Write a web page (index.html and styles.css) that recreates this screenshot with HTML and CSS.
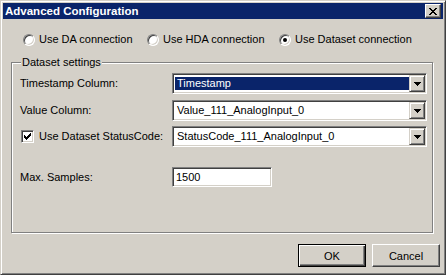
FILE: index.html
```html
<!DOCTYPE html>
<html lang="en">
<head>
    <meta charset="UTF-8">
    <title>Advanced Configuration</title>
    <link rel="stylesheet" href="styles.css">
</head>
<body>
    <div class="window">
        <div class="titlebar">
            <span class="title">Advanced Configuration</span>
            <button class="close-btn" title="Close">
                <svg width="8" height="7" viewBox="0 0 8 7" shape-rendering="crispEdges">
                    <path d="M0 0h2v1h-2z M6 0h2v1h-2z M1 1h2v1h-2z M5 1h2v1h-2z M2 2h4v1h-4z M3 3h2v1h-2z M2 4h4v1h-4z M1 5h2v1h-2z M5 5h2v1h-2z M0 6h2v1h-2z M6 6h2v1h-2z" fill="#000"/>
                </svg>
            </button>
        </div>

        <div class="client">
            <div class="radio-row">
                <label class="radio"><span class="radio-box"></span>Use DA connection</label>
                <label class="radio"><span class="radio-box"></span>Use HDA connection</label>
                <label class="radio"><span class="radio-box checked"></span>Use Dataset connection</label>
            </div>

            <div class="group">
                <span class="group-title">Dataset settings</span>

                <div class="form-row">
                    <span class="label">Timestamp Column:</span>
                    <div class="combo">
                        <span class="combo-text selected">Timestamp</span>
                        <span class="combo-btn"><svg width="7" height="4" viewBox="0 0 7 4" shape-rendering="crispEdges"><path d="M0 0h7v1h-1v1h-1v1h-1v1h-1v-1h-1v-1h-1v-1h-1z" fill="#000"/></svg></span>
                    </div>
                </div>

                <div class="form-row row-2">
                    <span class="label">Value Column:</span>
                    <div class="combo">
                        <span class="combo-text">Value_111_AnalogInput_0</span>
                        <span class="combo-btn"><svg width="7" height="4" viewBox="0 0 7 4" shape-rendering="crispEdges"><path d="M0 0h7v1h-1v1h-1v1h-1v1h-1v-1h-1v-1h-1v-1h-1z" fill="#000"/></svg></span>
                    </div>
                </div>

                <div class="form-row row-3">
                    <label class="label check">
                        <span class="check-box"><svg width="7" height="7" viewBox="0 0 7 7" shape-rendering="crispEdges"><path d="M6 0h1v3h-1v1h-1v1h-1v1h-1v1h-1v-1h-1v-1h-1v-3h1v1h1v1h1v-1h1v-1h1v-1h1z" fill="#000"/></svg></span>
                        Use Dataset StatusCode:
                    </label>
                    <div class="combo">
                        <span class="combo-text">StatusCode_111_AnalogInput_0</span>
                        <span class="combo-btn"><svg width="7" height="4" viewBox="0 0 7 4" shape-rendering="crispEdges"><path d="M0 0h7v1h-1v1h-1v1h-1v1h-1v-1h-1v-1h-1v-1h-1z" fill="#000"/></svg></span>
                    </div>
                </div>

                <div class="form-row row-4">
                    <span class="label">Max. Samples:</span>
                    <div class="textbox">1500</div>
                </div>
            </div>

            <div class="buttons">
                <button class="btn default">OK</button>
                <button class="btn">Cancel</button>
            </div>
        </div>
    </div>
</body>
</html>
```

FILE: styles.css
```css
body {
    margin: 0;
    font-family: "Liberation Sans", Arial, sans-serif;
    font-size: 11px;
    color: #000;
}
.window {
    width: 446px;
    height: 275px;
    box-sizing: border-box;
    background-color: #d4d0c8;
    border: 1px solid;
    border-color: #d4d0c8 #404040 #404040 #d4d0c8;
    box-shadow: inset 1px 1px #fff, inset -1px -1px #808080;
    padding: 2px;
    display: flex;
    flex-direction: column;
}
.titlebar {
    height: 16px;
    background-color: #0a246a;
    display: flex;
    align-items: center;
    justify-content: space-between;
    padding: 0 2px;
}
.title {
    color: #fff;
    font-weight: bold;
    font-size: 11.5px;
}
.close-btn {
    width: 16px;
    height: 14px;
    padding: 0;
    margin: 0;
    background-color: #d4d0c8;
    border: 1px solid;
    border-color: #fff #404040 #404040 #fff;
    box-shadow: inset -1px -1px #808080;
    display: flex;
    align-items: center;
    justify-content: center;
}
.client {
    flex: 1;
    padding: 14px 3px 0 8px;
}
.radio-row {
    display: grid;
    grid-template-columns: 124px 132px auto;
    margin-left: 12px;
    height: 13px;
}
.radio {
    display: flex;
    align-items: center;
    gap: 4px;
    line-height: 13px;
}
.radio-box {
    width: 12px;
    height: 12px;
    box-sizing: border-box;
    border-radius: 50%;
    background-color: #fff;
    border: 1px solid;
    border-color: #808080 #fff #fff #808080;
    box-shadow: inset 1px 1px #404040, inset -1px -1px #d4d0c8;
    position: relative;
}
.radio-box.checked::after {
    content: "";
    position: absolute;
    left: 3px;
    top: 3px;
    width: 4px;
    height: 4px;
    border-radius: 50%;
    background-color: #000;
}
.group {
    position: relative;
    margin-top: 16px;
    width: 422px;
    height: 171px;
    box-sizing: border-box;
    border: 1px solid #808080;
    box-shadow: inset 1px 1px #fff, 1px 1px #fff;
    padding: 10px 5px 0 8px;
}
.group-title {
    position: absolute;
    top: -8px;
    left: 9px;
    padding: 0 1px;
    line-height: 14px;
    background-color: #d4d0c8;
}
.form-row {
    display: grid;
    grid-template-columns: 152px 255px;
    align-items: center;
}
.row-2 {
    margin-top: 6px;
}
.row-3 {
    margin-top: 5px;
}
.row-4 {
    margin-top: 20px;
}
.label {
    line-height: 13px;
}
.label.check {
    display: flex;
    align-items: center;
    gap: 5px;
    padding-left: 1px;
}
.check-box {
    width: 13px;
    height: 13px;
    box-sizing: border-box;
    background-color: #fff;
    border: 1px solid;
    border-color: #808080 #fff #fff #808080;
    box-shadow: inset 1px 1px #404040, inset -1px -1px #d4d0c8;
    display: flex;
    align-items: center;
    justify-content: center;
}
.combo {
    height: 21px;
    box-sizing: border-box;
    background-color: #fff;
    border: 1px solid;
    border-color: #808080 #fff #fff #808080;
    box-shadow: inset 1px 1px #404040, inset -1px -1px #d4d0c8;
    padding: 1px;
    display: flex;
}
.combo-text {
    flex: 1;
    margin: 2px 0 2px 1px;
    padding-left: 2px;
    line-height: 13px;
    white-space: nowrap;
}
.combo-text.selected {
    background-color: #0a246a;
    color: #fff;
}
.combo-btn {
    width: 16px;
    height: 17px;
    box-sizing: border-box;
    background-color: #d4d0c8;
    border: 1px solid;
    border-color: #d4d0c8 #404040 #404040 #d4d0c8;
    box-shadow: inset 1px 1px #fff, inset -1px -1px #808080;
    display: flex;
    align-items: center;
    justify-content: center;
}
.textbox {
    width: 100px;
    height: 20px;
    box-sizing: border-box;
    background-color: #fff;
    border: 1px solid;
    border-color: #808080 #fff #fff #808080;
    box-shadow: inset 1px 1px #404040, inset -1px -1px #d4d0c8;
    padding: 0 3px;
    line-height: 18px;
}
.buttons {
    display: flex;
    justify-content: flex-end;
    gap: 6px;
    margin-top: 11px;
}
.btn {
    width: 68px;
    height: 23px;
    padding: 0;
    font-family: "Liberation Sans", Arial, sans-serif;
    font-size: 11px;
    color: #000;
    background-color: #d4d0c8;
    border: 1px solid;
    border-color: #fff #404040 #404040 #fff;
    box-shadow: inset -1px -1px #808080, inset 1px 1px #d4d0c8;
}
.btn.default {
    border-color: #000;
    box-shadow: inset 1px 1px #fff, inset -1px -1px #404040, inset -2px -2px #808080;
}
```
